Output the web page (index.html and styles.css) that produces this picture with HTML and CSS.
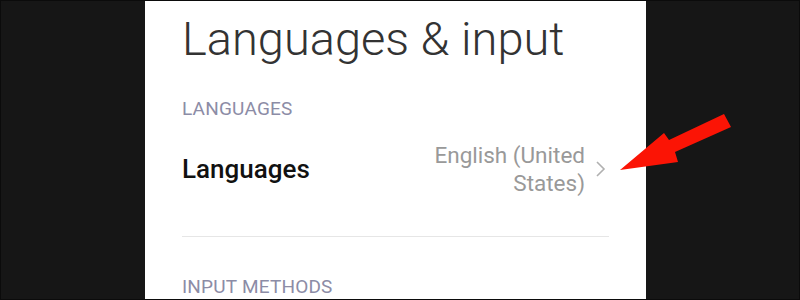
FILE: index.html
```html
<!DOCTYPE html>
<html lang="en">
<head>
<meta charset="UTF-8">
<meta name="viewport" content="width=device-width, initial-scale=1.0">
<title>Languages &amp; input</title>
<link rel="stylesheet" href="styles.css">
</head>
<body>
<div class="screen">
<div class="panel">
<h1 class="title">Languages &amp; input</h1>
<div class="section-label">LANGUAGES</div>
<div class="row">
<div class="row-name">Languages</div>
<div class="row-value">English (United<br>States)</div>
<svg class="chevron" width="12" height="18" viewBox="0 0 12 18">
<polyline points="2,2 9,9 2,16" fill="none" stroke="#b0b0b0" stroke-width="1.6"/>
</svg>
</div>
<div class="divider"></div>
<div class="section-label lower">INPUT METHODS</div>
</div>
<svg class="arrow" width="800" height="300" viewBox="0 0 800 300">
<polygon points="723,113 730,126 674,151 677,161 619,169 663,132 668,139" fill="#fb1405"/>
</svg>
</div>
</body>
</html>
```

FILE: styles.css
```css
body {
margin: 0;
font-family: Roboto, "Noto Sans", sans-serif;
}
.screen {
width: 800px; height: 300px;
box-sizing: border-box;
border: 1px solid rgba(0, 0, 0, 0.5);
background: #161616;
position: relative;
overflow: hidden;
}
.panel {
margin-left: 144px;
width: 501px; height: 100%;
box-sizing: border-box;
background: #ffffff;
padding: 0 37px;
}
.title {
margin: 0;
padding-top: 9px;
font-size: 47px; font-weight: 300;
line-height: 58px;
color: #333333;
}
.section-label {
margin-top: 31px;
font-size: 19px;
line-height: 20px;
letter-spacing: 0.2px;
color: #8c8ca6;
}
.section-label.lower {
margin-top: 40px;
}
.row {
display: flex;
align-items: center;
padding: 22px 0 39px;
}
.row-name {
flex: 1;
font-size: 26px; font-weight: 500;
color: #111111;
}
.row-value {
text-align: right;
font-size: 22.5px;
line-height: 28px;
color: #999999;
}
.chevron {
margin-left: 10px;
margin-right: 2px;
}
.divider {
height: 1px;
background: #e6e6e6;
}
.arrow {
position: absolute; top: 0; left: 0;
}
```
